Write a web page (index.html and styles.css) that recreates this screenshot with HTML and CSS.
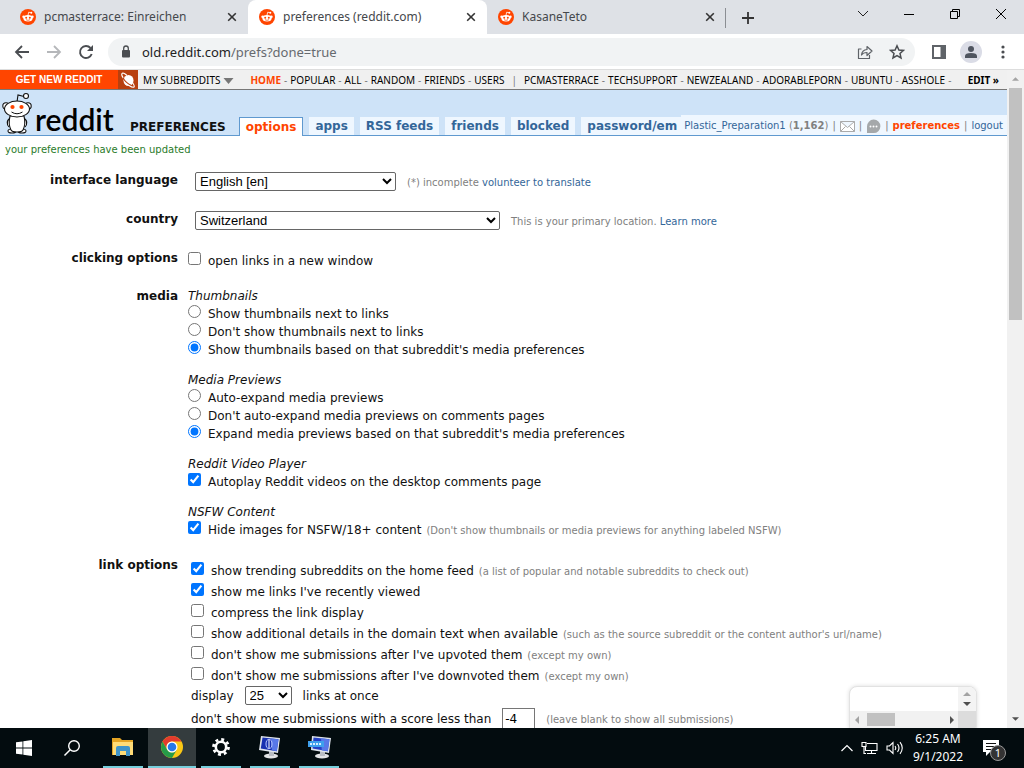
FILE: index.html
```html
<!DOCTYPE html>
<html lang="en">
<head>
<meta charset="utf-8">
<title>preferences (reddit.com)</title>
<link rel="stylesheet" href="styles.css">
</head>
<body>
<svg class="defs" width="0" height="0" aria-hidden="true">
  <symbol id="snoo" viewBox="0 0 16 16">
    <circle cx="8" cy="8" r="8" fill="#ff4500"/>
    <circle cx="3.6" cy="7.8" r="1.3" fill="#fff"/><circle cx="12.4" cy="7.8" r="1.3" fill="#fff"/>
    <ellipse cx="8" cy="9.3" rx="4.6" ry="3.3" fill="#fff"/>
    <path d="M8 6.2l.7-3 2.2.5" fill="none" stroke="#fff" stroke-width=".8"/><circle cx="11.3" cy="3.8" r="1" fill="#fff"/>
    <circle cx="6.2" cy="8.7" r="1" fill="#ff4500"/><circle cx="9.8" cy="8.7" r="1" fill="#ff4500"/>
    <path d="M6 10.7q2 1.3 4 0" fill="none" stroke="#ff4500" stroke-width=".7"/>
  </symbol>
  <symbol id="cross" viewBox="0 0 10 10"><path d="M1.2 1.2l7.6 7.6M8.8 1.2L1.2 8.8" stroke="currentColor" stroke-width="1.6" fill="none"/></symbol>
</svg>
<div class="screen">
  <header class="browser">
    <div class="tabstrip">
      <div class="tab"><svg class="fav"><use href="#snoo"/></svg><span>pcmasterrace: Einreichen</span><button aria-label="Close tab"><svg width="10" height="10"><use href="#cross"/></svg></button></div>
      <div class="tab active"><svg class="fav"><use href="#snoo"/></svg><span>preferences (reddit.com)</span><button aria-label="Close tab"><svg width="10" height="10"><use href="#cross"/></svg></button></div>
      <div class="tab"><svg class="fav"><use href="#snoo"/></svg><span>KasaneTeto</span><button aria-label="Close tab"><svg width="10" height="10"><use href="#cross"/></svg></button></div>
      <button class="newtab" aria-label="New tab"><svg width="12" height="12" viewBox="0 0 12 12"><path d="M6 0v12M0 6h12" stroke="#333" stroke-width="1.8"/></svg></button>
      <div class="winbtns">
        <button aria-label="Search tabs"><svg width="12" height="12" viewBox="0 0 12 12"><path d="M1 3l5 5 5-5" fill="none" stroke="#222"/></svg></button>
        <button aria-label="Minimize"><svg width="12" height="12" viewBox="0 0 12 12"><path d="M1 6.500h10" stroke="#000"/></svg></button>
        <button aria-label="Restore"><svg width="12" height="12" viewBox="0 0 12 12"><path d="M1.500 3.500h7v7h-7zM3.500 3.500v-2h7v7h-2" fill="none" stroke="#000"/></svg></button>
        <button aria-label="Close"><svg width="12" height="12" viewBox="0 0 12 12"><path d="M1 1l10 10M11 1L1 11" stroke="#000"/></svg></button>
      </div>
    </div>
    <div class="toolbar">
      <button aria-label="Back"><svg width="16" height="16" viewBox="0 0 16 16"><path d="M15 8H2M8 2L2 8l6 6" fill="none" stroke="#4a4d51" stroke-width="1.800"/></svg></button>
      <button aria-label="Forward"><svg width="16" height="16" viewBox="0 0 16 16"><path d="M1 8h13M8 2l6 6-6 6" fill="none" stroke="#b5b7ba" stroke-width="1.800"/></svg></button>
      <button aria-label="Reload"><svg width="16" height="16" viewBox="0 0 16 16"><path d="M13.700 10A6 6 0 1 1 12.500 4" fill="none" stroke="#4a4d51" stroke-width="1.900"/><path d="M15 1v6H9z" fill="#4a4d51"/></svg></button>
      <div class="omnibox">
        <svg width="10" height="13" viewBox="0 0 10 13"><rect x="1" y="5" width="8" height="7.500" rx="1" fill="#4a4d51"/><path d="M2.700 5V3.300a2.300 2.300 0 0 1 4.600 0V5" fill="none" stroke="#4a4d51" stroke-width="1.300"/></svg>
        <div class="url"><b>old.reddit.com</b>/prefs?done=true</div>
        <button aria-label="Share"><svg width="16" height="16" viewBox="0 0 16 16"><path d="M4.500 5H1.500v9.500h11V11M4.500 11q.5-5 5.500-5.500V2.500l5 4.500-5 4.500V8.500q-4 0-5.500 2.500z" fill="none" stroke="#5f6368" stroke-width="1.200" stroke-linejoin="round"/></svg></button>
        <button aria-label="Bookmark this page"><svg width="16" height="16" viewBox="0 0 16 16"><path d="M8 1.800l1.900 4.200 4.500.4-3.400 3 1 4.500L8 11.500l-4 2.400 1-4.500-3.400-3 4.500-.4z" fill="none" stroke="#4a4d51" stroke-width="1.500"/></svg></button>
      </div>
      <button aria-label="Side panel"><svg width="16" height="16" viewBox="0 0 16 16"><rect x="2" y="2" width="12" height="12" fill="none" stroke="#5f6368" stroke-width="2"/><path d="M9.500 2H15v12H9.500z" fill="#5f6368"/></svg></button>
      <button class="profile" aria-label="Profile"><svg width="22" height="22" viewBox="0 0 22 22"><circle cx="11" cy="11" r="11" fill="#dadce6"/><circle cx="11" cy="8" r="3" fill="#4f5560"/><path d="M5 17v-2q0-3 6-3t6 3v2z" fill="#4f5560"/></svg></button>
      <button class="more" aria-label="Menu"><svg width="4" height="14" viewBox="0 0 4 14"><g fill="#4a4d51"><circle cx="2" cy="2" r="1.600"/><circle cx="2" cy="7" r="1.600"/><circle cx="2" cy="12" r="1.600"/></g></svg></button>
    </div>
  </header>

  <div class="viewport">
    <main class="page">
      <nav class="srbar">
        <a class="getnew" href="#">GET NEW REDDIT</a>
        <span class="planet"><svg width="18" height="18" viewBox="0 0 18 18"><ellipse cx="9.500" cy="9.500" rx="5" ry="5.500" fill="#fff"/><path d="M5 8q-3-4-2-5.500T8 4.500M13 11q3 4 2 5t-5-1.500" fill="none" stroke="#fff" stroke-width="1.200"/><path d="M4 6.500q2 5 8.500 8" stroke="#b8400f" stroke-width="1.100" fill="none"/></svg></span>
        <a class="mysr" href="#">MY SUBREDDITS</a><svg class="caret" width="11" height="6" viewBox="0 0 10 6"><path d="M0 0h10L5 6z" fill="#777"/></svg>
        <div class="srlist"><a class="home" href="#">HOME</a><i>-</i><a href="#">POPULAR</a><i>-</i><a href="#">ALL</a><i>-</i><a href="#">RANDOM</a><i>-</i><a href="#">FRIENDS</a><i>-</i><a href="#">USERS</a><i class="bar">|</i><a href="#">PCMASTERRACE</a><i>-</i><a href="#">TECHSUPPORT</a><i>-</i><a href="#">NEWZEALAND</a><i>-</i><a href="#">ADORABLEPORN</a><i>-</i><a href="#">UBUNTU</a><i>-</i><a href="#">ASSHOLE</a><i>-</i><a href="#">C</a></div>
        <a class="edit" href="#">EDIT »</a>
      </nav>
      <div class="head">
        <a class="logo" href="#" aria-label="reddit"><svg width="32" height="42" viewBox="0 0 32 42"><g fill="#fff" stroke="#111" stroke-width="1.100"><path d="M17 10l1-7 5 1.200" fill="none"/><circle cx="26" cy="4" r="2.500"/><circle cx="6" cy="14" r="3.200"/><circle cx="28" cy="14" r="3.200"/><ellipse cx="12" cy="39" rx="4" ry="2"/><ellipse cx="22" cy="39" rx="4" ry="2"/><path d="M10 26q-5 4-1 9M24 26q5 4 1 9"/><path d="M10 24q-2 8 1 14 1 2 6 2t6-2q3-6 1-14z"/><ellipse cx="17" cy="17" rx="12.500" ry="8"/></g><circle cx="12.500" cy="15" r="2.100" fill="#ff4500"/><circle cx="21.500" cy="15" r="2.100" fill="#ff4500"/><path d="M11.500 20q5.500 3.500 11 0" fill="none" stroke="#111"/></svg><span>reddit</span></a>
        <h1>PREFERENCES</h1>
        <nav class="tabs"><a class="selected" href="#">options</a><a href="#">apps</a><a href="#">RSS feeds</a><a href="#">friends</a><a href="#">blocked</a><a href="#">password/em</a></nav>
        <div class="user"><a href="#">Plastic_Preparation1</a> (<b>1,162</b>)<i>|</i><svg width="15" height="11" viewBox="0 0 15 11"><path d="M.5.500h14v10H.5zM.5.500l7 6 7-6M.5 10.500l5-5M14.500 10.500l-5-5" fill="#fff" stroke="#aaa"/></svg><i>|</i><svg width="15" height="15" viewBox="0 0 15 15"><path d="M1 14V7.500A6.700 6.700 0 1 1 7.500 14z" fill="#a5a8aa"/><circle cx="4.500" cy="7.500" r="1" fill="#fff"/><circle cx="7.500" cy="7.500" r="1" fill="#fff"/><circle cx="10.500" cy="7.500" r="1" fill="#fff"/></svg><i>|</i><a class="current" href="#">preferences</a><i>|</i><a href="#">logout</a></div>
      </div>
      <p class="status">your preferences have been updated</p>
      <form class="prefs">
        <section class="field"><h2><label for="lang">interface language</label></h2>
          <div class="line inset"><select id="lang" class="w-lang"><option>English [en]</option></select><small>(*) incomplete <a href="#">volunteer to translate</a></small></div></section>
        <section class="field"><h2><label for="country">country</label></h2>
          <div class="line inset"><select id="country" class="w-country"><option>Switzerland</option></select><small>This is your primary location. <a href="#">Learn more</a></small></div></section>
        <section class="field clicking"><h2>clicking options</h2>
          <div><label class="opt"><input type="checkbox">open links in a new window</label></div></section>
        <section class="field media"><h2>media</h2>
          <div class="groups">
            <div><em>Thumbnails</em>
              <label class="opt"><input type="radio" name="thumb">Show thumbnails next to links</label>
              <label class="opt"><input type="radio" name="thumb">Don't show thumbnails next to links</label>
              <label class="opt"><input type="radio" name="thumb" checked>Show thumbnails based on that subreddit's media preferences</label></div>
            <div><em>Media Previews</em>
              <label class="opt"><input type="radio" name="prev">Auto-expand media previews</label>
              <label class="opt"><input type="radio" name="prev">Don't auto-expand media previews on comments pages</label>
              <label class="opt"><input type="radio" name="prev" checked>Expand media previews based on that subreddit's media preferences</label></div>
            <div><em>Reddit Video Player</em>
              <label class="opt"><input type="checkbox" checked>Autoplay Reddit videos on the desktop comments page</label></div>
            <div><em>NSFW Content</em>
              <label class="opt"><input type="checkbox" checked>Hide images for NSFW/18+ content<small>(Don't show thumbnails or media previews for anything labeled NSFW)</small></label></div>
          </div></section>
        <section class="field"><h2>link options</h2>
          <div class="links">
            <label class="opt"><input type="checkbox" checked>show trending subreddits on the home feed<small>(a list of popular and notable subreddits to check out)</small></label>
            <label class="opt"><input type="checkbox" checked>show me links I've recently viewed</label>
            <label class="opt"><input type="checkbox">compress the link display</label>
            <label class="opt"><input type="checkbox">show additional details in the domain text when available<small>(such as the source subreddit or the content author's url/name)</small></label>
            <label class="opt"><input type="checkbox">don't show me submissions after I've upvoted them<small>(except my own)</small></label>
            <label class="opt"><input type="checkbox">don't show me submissions after I've downvoted them<small>(except my own)</small></label>
            <div class="line count"><label for="num">display</label><select id="num" class="w-num"><option>25</option></select><span>links at once</span></div>
            <div class="line score"><label for="score">don't show me submissions with a score less than</label><input id="score" type="text" value="-4"><small>(leave blank to show all submissions)</small></div>
          </div></section>
      </form>
    </main>
    <div class="scrollbar"><svg width="7" height="4" viewBox="0 0 8 4"><path d="M0 4h8L4 0z" fill="#a3a3a3"/></svg><div class="thumb"></div><svg width="7" height="4" viewBox="0 0 8 4"><path d="M0 0h8L4 4z" fill="#505050"/></svg></div>
    <div class="chat">
      <div class="vbar"><svg width="8" height="4" viewBox="0 0 8 4"><path d="M0 4h8L4 0z" fill="#a3a3a3"/></svg><svg width="8" height="4" viewBox="0 0 8 4"><path d="M0 0h8L4 4z" fill="#505050"/></svg></div>
      <div class="hbar"><svg width="4" height="8" viewBox="0 0 4 8"><path d="M4 0v8L0 4z" fill="#a3a3a3"/></svg><div class="hthumb"></div><svg width="4" height="8" viewBox="0 0 4 8"><path d="M0 0v8l4-4z" fill="#505050"/></svg></div>
      <div class="corner"></div>
    </div>
  </div>

  <footer class="taskbar">
    <button aria-label="Start"><svg width="16" height="16" viewBox="0 0 16 16"><path d="M0 2.300l6.500-.9v6.200H0zM7.300 1.300L16 0v7.600H7.300zM0 8.400h6.500v6.200L0 13.700zM7.300 8.400H16V16l-8.700-1.300z" fill="#fff"/></svg></button>
    <button aria-label="Search"><svg width="18" height="18" viewBox="0 0 18 18"><circle cx="11" cy="7" r="5.300" fill="none" stroke="#fff" stroke-width="1.400"/><path d="M7.200 10.800L1.500 16.500" stroke="#fff" stroke-width="1.500"/></svg></button>
    <button class="run" aria-label="File Explorer"><svg width="22" height="20" viewBox="0 0 22 20"><path d="M0 1h8l2 2h11v15H0z" fill="#e5a524"/><path d="M1 5h20v13H1z" fill="#ffdc77"/><path d="M4 11q0-2 2-2h10q2 0 2 2v8h-4v-5H8v5H4z" fill="#3f94c9"/></svg></button>
    <button class="run front" aria-label="Chrome"><svg width="22" height="22" viewBox="0 0 22 22"><circle cx="11" cy="11" r="11" fill="#fbc815"/><path d="M1.500 5.500A11 11 0 0 1 20.500 5.500H11A5.500 5.500 0 0 0 6.200 13.700z" fill="#e33b2e"/><path d="M1.500 5.500A11 11 0 0 0 11 22l4.800-8.300a5.500 5.500 0 0 1-9.600 0z" fill="#269b49"/><circle cx="11" cy="11" r="5.500" fill="#fff"/><circle cx="11" cy="11" r="4.300" fill="#2778e8"/></svg></button>
    <button class="run" aria-label="Settings"><svg width="18" height="18" viewBox="0 0 18 18"><g fill="none" stroke="#fff"><circle cx="9" cy="9" r="5.200" stroke-width="2.600"/><circle cx="9" cy="9" r="7.500" stroke-width="2.800" stroke-dasharray="2.900 2.990"/></g></svg></button>
    <button class="run" aria-label="Remote session"><svg width="22" height="24" viewBox="0 0 22 24"><ellipse cx="12" cy="21" rx="7" ry="2.600" fill="#e3e4e6"/><path d="M10 16h5v5h-5z" fill="#b9bdc4"/><path d="M2 1l19 2-2 15L0 15z" fill="#dfe4ec"/><path d="M3.500 2.500l16 1.700-1.700 12L1.800 13.500z" fill="#1730b0"/><path d="M12 3.500l7.500.7-1.700 12-5-1z" fill="#5878e8"/><ellipse cx="10" cy="9" rx="3" ry="4.500" fill="none" stroke="#b8c8ff"/><path d="M10 5v8" stroke="#fff"/></svg></button>
    <button class="run" aria-label="Remote desktop"><svg width="24" height="24" viewBox="0 0 24 24"><ellipse cx="15" cy="21" rx="7" ry="2.600" fill="#e3e4e6"/><path d="M13 16h5v5h-5z" fill="#b9bdc4"/><path d="M5 1l19 2-2 15L4 15z" fill="#dfe4ec"/><path d="M6.500 2.500l16 1.700-1.700 12L5.500 13.500z" fill="#2540c4"/><path d="M14 3.300l8.500.9-1.700 12-6-1z" fill="#5878e8"/><path d="M1 6h16v6H1z" fill="#3ea0ed"/><path d="M3 9h12" stroke="#d6efff" stroke-width="2" stroke-dasharray="2 1"/></svg></button>
    <div class="tray">
      <svg width="12" height="8" viewBox="0 0 12 8"><path d="M.5 7L6 1.500 11.500 7" fill="none" stroke="#fff" stroke-width="1.200"/></svg>
      <svg width="17" height="14" viewBox="0 0 17 14"><path d="M6 2.500h10v7H4.500V6M10.500 9.500v3M6 12.500h9M1 1.500h4v4H1zM3 5.500v7h2" fill="none" stroke="#fff" stroke-width="1.100"/></svg>
      <svg width="18" height="14" viewBox="0 0 18 14"><path d="M1 5h2.500L7 1.500v11L3.500 9H1zM9 5q1.500 2 0 4M11.500 3q3 4 0 8M14 1.200q4.500 5.800 0 11.600" fill="none" stroke="#fff" stroke-width="1.100"/></svg>
      <div class="clock"><span>6:25 AM</span><span>9/1/2022</span></div>
      <div class="notes"><svg width="18" height="17" viewBox="0 0 18 17"><path d="M1 0h16v12H8l-4 4v-4H1z" fill="#fff"/><path d="M4 3.500h10M4 6.500h10M4 9.500h6" stroke="#111"/></svg><span>1</span></div>
    </div>
  </footer>
</div>
</body>
</html>
```

FILE: styles.css
```css
* { box-sizing: border-box; }
body { margin: 0; font: 12px/18px Verdana, "DejaVu Sans", sans-serif; color: #111; background: #fff; }
a { color: #369; text-decoration: none; }
i { font-style: normal; }
button { border: 0; padding: 0; background: none; display: flex; align-items: center; justify-content: center; }
svg { flex: none; }
.defs { position: absolute; }
.screen { height: 100vh; display: flex; flex-direction: column; overflow: hidden; }

/* browser window */
.browser { flex: none; font: 12px/16px "Segoe UI", "Noto Sans", sans-serif; color: #45484c; }
.tabstrip { display: flex; height: 34px; background: #dee1e6; }
.tab { width: 239px; padding: 0 11px 0 19px; display: flex; align-items: center; gap: 8px; }
.tab:first-child { width: 248px; padding-left: 20px; }
.tab.active { background: #fff; border-radius: 8px 8px 0 0; padding-left: 11px; }
.tab:nth-child(3) { padding-left: 11px; }
.tab span { flex: 1; white-space: nowrap; }
.tab button { color: #333; }
.fav { width: 16px; height: 16px; }
.newtab { width: 44px; border-left: 1px solid #8b8e93; margin: 8px 0 6px -1px; }
.winbtns { display: flex; margin-left: auto; height: 28px; }
.winbtns button { width: 46px; }
.toolbar { height: 36px; padding: 0 13px 0 14px; display: flex; align-items: center; gap: 16px; background: #fff; border-bottom: 1px solid #ddd; }
.omnibox { flex: 1; height: 28px; margin-left: -2px; padding: 0 10px 0 13px; border-radius: 14px; background: #f1f3f4; display: flex; align-items: center; gap: 16px; }
.omnibox .url { flex: 1; margin-left: -5px; font-size: 13px; color: #666a6f; }
.url { white-space: nowrap; }
.url b { font-weight: 400; color: #222; }
.toolbar .profile { margin: 0 -3px; }
.toolbar .more { width: 16px; }

/* page frame */
.viewport { position: relative; flex: 1; min-height: 0; display: flex; overflow: hidden; }
.page { flex: 1; min-width: 0; overflow: hidden; }
.scrollbar { width: 17px; flex: none; background: #f1f1f1; display: flex; flex-direction: column; align-items: center; padding: 7px 0; }
.thumb { width: 13px; height: 36%; margin-top: 7px; margin-bottom: auto; background: #c1c1c1; }
.chat { position: absolute; right: 47px; bottom: -6px; width: 128px; height: 48px; border: 1px solid #e2e2e2; border-radius: 8px; background: #fff; box-shadow: 0 0 4px #ddd; overflow: hidden; display: grid; grid-template: 1fr 22px / 1fr 18px; }
.vbar { grid-column: 2; background: #f4f4f4; display: flex; flex-direction: column; align-items: center; justify-content: space-evenly; }
.hbar { grid-row: 2; grid-column: 1; background: #f1f1f1; display: flex; align-items: center; gap: 8px; padding: 0 4px 5px 5px; }
.hthumb { width: 28px; height: 13px; background: #c1c1c1; margin-right: auto; }
.corner { background: #dcdcdc; }

/* subreddit bar */
.srbar { height: 20px; display: flex; align-items: center; font: 10px/18px "Noto Sans", sans-serif; background: #f0f0f0; border-bottom: 1px solid #777; white-space: nowrap; }
.srbar a { color: #000; }
.srbar .getnew { width: 118px; text-align: center; background: #ff4500; color: #fff; font: bold 10px/19px Arial, "Liberation Sans", sans-serif; }
.planet { width: 20px; height: 19px; margin-right: 5px; background: #b8400f; display: flex; align-items: center; justify-content: center; }
.caret { margin: 2px 16px 0 3px; }
.srlist { flex: 1; min-width: 0; overflow: hidden; }
.srlist i { margin: 0 3px; color: #777; }
.srlist .bar { margin: 0 7px; }
.srlist .home { color: #ff4500; font-weight: 700; }
.srbar .edit { font-weight: 700; padding: 0 8px 0 14px; }

/* reddit header */
.head { height: 46px; display: flex; align-items: flex-end; background: #cee3f8; border-bottom: 1px solid #5f99cf; }
.logo { display: flex; align-items: flex-end; width: 130px; gap: 3px; color: #000; font: 600 30px/30px Lato, sans-serif; padding-bottom: 1px; }
.head h1 { margin: 0 13px 0 0; font-size: 12px; line-height: 16px; }
.tabs { flex: 1; min-width: 0; overflow: hidden; display: flex; gap: 6px; margin-bottom: -1px; font-weight: 700; white-space: nowrap; }
.tabs a { padding: 1px 6px 0; line-height: 17px; margin-bottom: 1px; background: #eff7ff; }
.tabs a.selected { color: #ff4500; background: #fff; border: 1px solid #5f99cf; border-bottom: 0; line-height: 17px; margin: 0; }
.user { flex: none; height: 20px; padding: 2px 4px 0 3px; display: flex; align-items: center; background: #eff7ff; color: #808080; font-size: 10px; white-space: pre; }
.user i { margin: 0 4px; }
.user .current { color: #ff4500; font-weight: 700; }
.status { margin: 5px 5px 12px; font-size: 10px; color: #2a7b2a; }

/* preferences */
.prefs { margin: 0; white-space: nowrap; }
.field { display: grid; grid-template-columns: 178px 1fr; column-gap: 10px; min-height: 39px; }
.field h2 { margin: 0; font-size: 12px; line-height: 18px; text-align: right; }
.field.clicking { min-height: 38px; }
.clicking .opt { margin-top: 3px; }
.field.media { padding-bottom: 17px; }
.groups { display: grid; gap: 12px; }
.groups em { display: block; }
.opt { display: flex; align-items: center; height: 18px; }
.opt input { width: 13px; height: 13px; margin: 0 7px 5px 0; accent-color: #0075ff; }
small { font-size: 10px; color: #808080; margin: 2px 0 0 5px; }
.line { display: flex; align-items: center; height: 21px; gap: 11px; }
.line small { margin-left: 0; }
.inset { padding-left: 7px; }
select { height: 19px; padding: 0; border: 1px solid #666; border-radius: 2px; background: #fff; color: #000; font: 13px Arial, "Liberation Sans", sans-serif; }
.w-lang { width: 201px; }
.w-country { width: 305px; }
.w-num { width: 47px; }
.links { padding: 4px 0 0 3px; }
.links .opt { height: 21px; }
.count { height: 19px; }
.score { margin-top: 3px; }
.score input { width: 33px; height: 21px; padding: 0 2px; border: 1px solid #767676; font: 12px "DejaVu Sans", sans-serif; }

/* taskbar */
.taskbar { flex: none; height: 40px; background: #030c0f; display: flex; }
.taskbar button { width: 48px; height: 40px; }
.taskbar .run { width: 40px; margin: 0 4px 0 5px; border-bottom: 2px solid #76cfdc; }
.taskbar .run:nth-child(3) { margin-left: 7px; }
.taskbar .front { width: 48px; margin: 0 0 0 1px; background: #343c3e; }
.tray { margin-left: auto; display: flex; align-items: center; gap: 8px; padding-right: 20px; color: #fff; font: 12px/18px "Segoe UI", "Noto Sans", sans-serif; }
.clock { width: 48px; margin: 0 12px 0 2px; display: flex; flex-direction: column; align-items: center; white-space: nowrap; }
.notes { position: relative; height: 17px; width: 22px; }
.notes span { position: absolute; left: 8px; top: 5px; width: 16px; height: 16px; border: 1px solid #999; border-radius: 8px; background: #333; font-size: 11px; line-height: 14px; text-align: center; }
```
